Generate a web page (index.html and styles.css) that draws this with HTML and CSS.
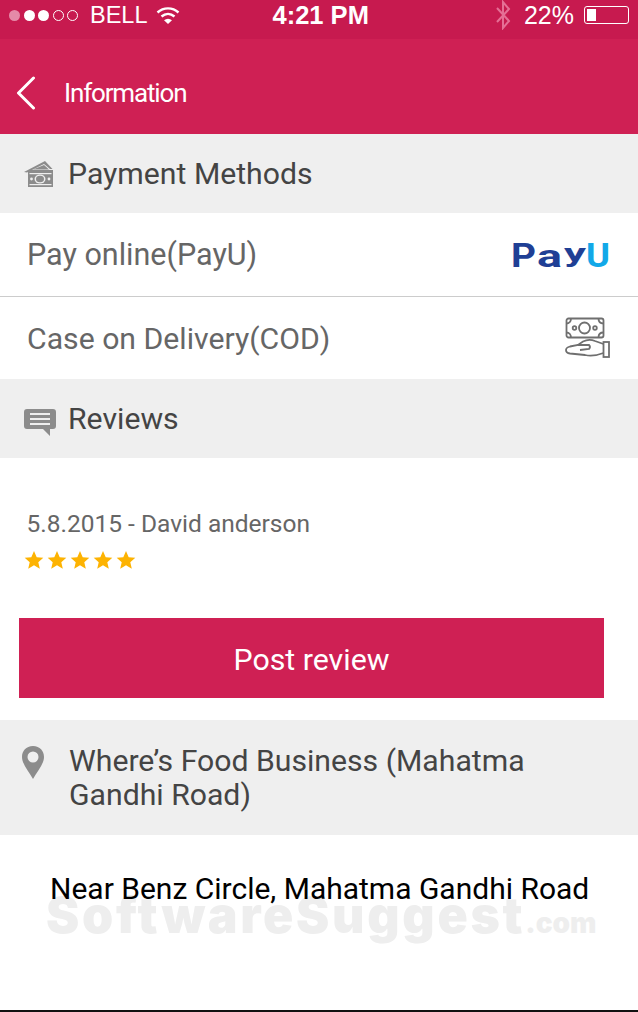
FILE: index.html
```html
<!DOCTYPE html>
<html>
<head>
<title>Information</title>
<link rel="stylesheet" href="styles.css">
</head>
<body>
<div id="container">

<div class="status">
  <div class="dots">
    <span class="dot dim"></span><span class="dot"></span><span class="dot"></span><span class="dot empty"></span><span class="dot empty"></span>
  </div>
  <span class="carrier">BELL</span>
  <svg class="wifi" width="24" height="18" viewBox="0 0 24 18">
    <path d="M1.5 6.500C7.500 1 16.500 1 22.500 6.500" fill="none" stroke="#fff" stroke-width="2.400"/>
    <path d="M5.500 10.500C9.500 7 14.500 7 18.500 10.500" fill="none" stroke="#fff" stroke-width="2.400"/>
    <path d="M8 14.200C10.500 12.200 13.500 12.200 16 14.200L12 18Z" fill="#fff"/>
  </svg>
  <span class="time">4:21 PM</span>
  <svg class="bluetooth" width="16" height="30" viewBox="0 0 16 30">
    <path d="M2 8L14 21L8 28V2L14 9L2 22" fill="none" stroke="#e56f95" stroke-width="2"/>
  </svg>
  <span class="percent">22%</span>
  <div class="battery"><div class="battery-fill"></div></div>
</div>

<div class="topbar">
  <svg class="back" width="20" height="34" viewBox="0 0 20 34">
    <path d="M17.500 2L2.500 17L17.500 32" fill="none" stroke="#fff" stroke-width="3" stroke-linecap="round" stroke-linejoin="round"/>
  </svg>
  <span class="topbar-title">Information</span>
</div>

<div class="section">
  <svg class="section-icon" width="33" height="28" viewBox="0 0 33 28">
    <path d="M0 12L21 1L28.500 9H26L20 4L3 12.500Z" fill="#8c8c8c"/>
    <path d="M9 9.500L20 5L25 9.500Z" fill="#8c8c8c"/>
    <rect x="4" y="10" width="25" height="17" fill="#8c8c8c"/>
    <rect x="5.500" y="13" width="22" height="1.200" fill="#efefef"/>
    <rect x="5.500" y="24" width="22" height="1.200" fill="#efefef"/>
    <ellipse cx="16" cy="19" rx="5.500" ry="4.500" fill="#efefef"/>
    <ellipse cx="16" cy="19" rx="4" ry="3.200" fill="#8c8c8c"/>
    <circle cx="7.500" cy="19" r="1.400" fill="#efefef"/>
    <circle cx="25" cy="19" r="1.400" fill="#efefef"/>
  </svg>
  <span class="section-title">Payment Methods</span>
</div>

<div class="pay-row line">
  <span class="pay-online">Pay online(PayU)</span>
  <svg class="payu" width="100" height="40" viewBox="-2 0 100 40">
    <text class="payu-blue" x="-2" y="32" font-size="33" textLength="25" lengthAdjust="spacingAndGlyphs">P</text>
    <text class="payu-blue" x="24" y="32" font-size="31" textLength="25" lengthAdjust="spacingAndGlyphs">a</text>
    <text class="payu-blue" x="51" y="27" font-size="26" textLength="22" lengthAdjust="spacingAndGlyphs">y</text>
    <text class="payu-light" x="73" y="32" font-size="33" textLength="24" lengthAdjust="spacingAndGlyphs">U</text>
  </svg>
</div>

<div class="pay-row">
  <span>Case on Delivery(COD)</span>
  <svg class="cod" width="46" height="42" viewBox="0 0 46 42" fill="none" stroke="#6f6f6f" stroke-width="1.800">
    <rect x="1.500" y="1.500" width="37" height="19" rx="2"/>
    <circle cx="19.500" cy="11" r="5.500"/>
    <circle cx="9.500" cy="11" r="1.800"/>
    <circle cx="30" cy="11" r="1.800"/>
    <path d="M1.500 6.500C4 6.500 6 4.500 6 1.500M33.500 1.500C33.500 4.500 35.500 6.500 38.500 6.500M1.500 15.500C4 15.500 6 17.500 6 20.500M33.500 20.500C33.500 17.500 35.500 15.500 38.500 15.500"/>
    <path d="M38.500 27L30 24Q24 21.500 18 24.500L13 28L5 29.500Q1 30.500 1 33Q1 36 5 36.500L20 38Q28 40 38.500 36"/>
    <path d="M13 28H24Q26 30 24 32L15 33"/>
    <rect x="38.500" y="25" width="5.500" height="15"/>
  </svg>
</div>

<div class="section">
  <svg class="section-icon" width="33" height="34" viewBox="0 -6 33 34">
    <path d="M3 1H29Q32 1 32 4V18Q32 21 29 21H26V28L19 21H3Q0 21 0 18V4Q0 1 3 1Z" fill="#8c8c8c"/>
    <path d="M6 6H26M6 11H26M6 16H26" stroke="#efefef" stroke-width="2.200"/>
  </svg>
  <span class="section-title">Reviews</span>
</div>

<div class="review">
  <div class="review-meta">5.8.2015 - David anderson</div>
  <div class="stars">
    <svg width="20" height="20" viewBox="0 0 20 20"><path class="star" d="M10 1L12.700 7.200L19.300 7.800L14.300 12.200L15.800 18.800L10 15.300L4.200 18.800L5.700 12.200L0.700 7.800L7.300 7.200Z"/></svg>
    <svg width="20" height="20" viewBox="0 0 20 20"><path class="star" d="M10 1L12.700 7.200L19.300 7.800L14.300 12.200L15.800 18.800L10 15.300L4.200 18.800L5.700 12.200L0.700 7.800L7.300 7.200Z"/></svg>
    <svg width="20" height="20" viewBox="0 0 20 20"><path class="star" d="M10 1L12.700 7.200L19.300 7.800L14.300 12.200L15.800 18.800L10 15.300L4.200 18.800L5.700 12.200L0.700 7.800L7.300 7.200Z"/></svg>
    <svg width="20" height="20" viewBox="0 0 20 20"><path class="star" d="M10 1L12.700 7.200L19.300 7.800L14.300 12.200L15.800 18.800L10 15.300L4.200 18.800L5.700 12.200L0.700 7.800L7.300 7.200Z"/></svg>
    <svg width="20" height="20" viewBox="0 0 20 20"><path class="star" d="M10 1L12.700 7.200L19.300 7.800L14.300 12.200L15.800 18.800L10 15.300L4.200 18.800L5.700 12.200L0.700 7.800L7.300 7.200Z"/></svg>
  </div>
</div>

<button type="button" class="post-review">Post review</button>

<div class="section location">
  <svg class="pin" width="24" height="34" viewBox="0 0 24 34">
    <path fill-rule="evenodd" d="M12 0C5 0 1 5 1 11C1 18 8 26 12 33C16 26 23 18 23 11C23 5 19 0 12 0ZM12 5.500A5.500 5.500 0 1 1 12 16.500A5.500 5.500 0 1 1 12 5.500Z" fill="#8c8c8c"/>
  </svg>
  <span class="section-title location-title">Where’s Food Business (Mahatma Gandhi Road)</span>
</div>

<div class="address">
  <div class="watermark">SoftwareSuggest<small>.com</small></div>
  <p>Near Benz Circle, Mahatma Gandhi Road</p>
</div>

</div>
</body>
</html>
```

FILE: styles.css
```css
html, body {
  margin:0;
  padding:0;
  background:#fff;
}
#container {
  width:638px;
  height:1012px;
  overflow:hidden;
  display:flex;
  flex-direction:column;
  font-family:"Roboto", sans-serif;
  border-bottom:2px solid #111;
  box-sizing:border-box;
}
/* status bar */
.status {
  height:39px;
  flex:none;
  background:#c71a4f;
  color:#fff;
  font-family:"Liberation Sans", sans-serif;
  display:flex;
  align-items:center;
  padding-left:9px;
  padding-bottom:9px;
  box-sizing:border-box;
  font-size:25px;
}
.dots {
  display:flex;
  gap:3.500px;
}
.dot {
  width:11px;
  height:11px;
  border-radius:50%;
  background:#fff;
  box-sizing:border-box;
}
.dot.dim {
  background:#e58aa8;
}
.dot.empty {
  background:none;
  border:1px solid #fff;
}
.carrier {
  margin-left:12px;
  font-size:23.500px;
}
.wifi {
  margin-left:8px;
}
.time {
  margin-left:93px;
  font-weight:bold;
  font-size:25.500px;
}
.bluetooth {
  margin-left:126px;
}
.percent {
  margin-left:13px;
}
.battery {
  width:45px;
  height:18px;
  margin-left:10px;
  border:1px solid #fff;
  border-radius:3px;
  padding:2px;
  box-sizing:border-box;
}
.battery-fill {
  width:9px;
  height:100%;
  background:#fff;
}
/* header */
.topbar {
  height:95px;
  flex:none;
  background:#cf2054;
  display:flex;
  align-items:center;
  padding-left:16px;
  padding-top:12px;
  box-sizing:border-box;
}
.topbar-title {
  margin-left:28px;
  color:#fff;
  font-size:26px;
  letter-spacing:-1.150px;
}
/* sections */
.section {
  height:79px;
  flex:none;
  background:#efefef;
  display:flex;
  align-items:center;
  padding-left:24px;
  box-sizing:border-box;
}
.section-icon {
  flex:none;
}
.section-title {
  color:#444;
  font-size:30.200px;
  margin-left:11px;
}
.pay-row {
  height:82px;
  flex:none;
  display:flex;
  align-items:center;
  justify-content:space-between;
  padding:0 28px 0 27px;
  color:#666;
  font-size:30.200px;
  box-sizing:border-box;
}
.pay-row.line {
  border-bottom:1px solid #ccc;
  height:84px;
}
.pay-online {
  font-size:30.500px;
}
.pay-row svg {
  margin-right:-1px;
}
.payu {
  flex:none;
}
.payu text {
  font-family:"Roboto", sans-serif;
  font-weight:bold;
}
.payu-blue {
  fill:#1f3f95;
}
.payu-light {
  fill:#12a8e8;
}
/* review */
.review {
  height:160px;
  flex:none;
  padding:50px 0 0 26.500px;
  box-sizing:border-box;
}
.review-meta {
  color:#666;
  font-size:24.500px;
  line-height:32px;
}
.stars {
  display:flex;
  gap:3px;
  margin:10px 0 0 -3px;
}
.star {
  fill:#fdb302;
}
.post-review {
  display:block;
  flex:none;
  width:585px;
  height:80px;
  margin:0 0 22px 19px;
  padding:2px 0 0;
  border:0;
  background:#cf2054;
  color:#fff;
  font-family:"Roboto", sans-serif;
  font-size:30.300px;
}
/* location */
.location {
  height:115px;
  padding-left:21px;
}
.pin {
  flex:none;
  align-self:flex-start;
  margin-top:26px;
}
.location-title {
  margin-left:24px;
  width:520px;
  line-height:34px;
}
.address {
  position:relative;
  flex:1;
  padding-left:50px;
}
.address p {
  position:relative;
  margin:0;
  padding-top:36px;
  color:#000;
  font-size:30px;
  line-height:36px;
}
.watermark {
  position:absolute;
  left:46px;
  top:50px;
  color:#eee;
  font-family:"Inter", sans-serif;
  font-weight:900;
  font-size:50px;
  line-height:60px;
  letter-spacing:2.700px;
  white-space:nowrap;
}
.watermark small {
  font-size:28px;
  letter-spacing:0;
}
```
